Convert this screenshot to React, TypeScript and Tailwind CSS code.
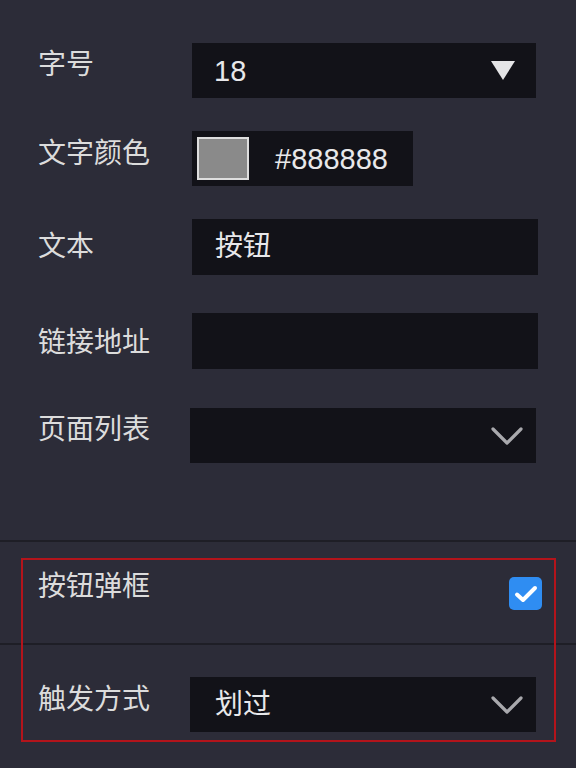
import React from "react";

const FONT = { fontFamily: '"Liberation Sans", "Noto Sans CJK SC", sans-serif' };

function Chevron() {
  return (
    <svg width="32" height="20" viewBox="0 0 32 20" className="block">
      <polyline points="2,3 16,17 30,3" fill="none" stroke="#a9a9ad" strokeWidth="3.2" strokeLinecap="round" strokeLinejoin="round" />
    </svg>
  );
}

function Triangle() {
  return (
    <svg width="24" height="19" viewBox="0 0 24 19" className="block">
      <polygon points="0,0 24,0 12,19" fill="#e4e4e6" />
    </svg>
  );
}

export default function App() {
  return (
    <div className="relative w-[576px] h-[768px] overflow-hidden bg-[#2c2c38] text-[#dcdcdc]" style={FONT}>
      {/* Section 1 */}
      <div className="flex flex-col pl-[38px] pt-[43px] pb-[77px]">
        {/* 字号 */}
        <div className="flex h-[55px] items-center">
          <div className="w-[154px] -mt-[11px] text-[28px] leading-[28px]">字号</div>
          <div className="flex h-[55px] w-[344px] items-center justify-between bg-[#121218] pl-[22px] pr-[21px]">
            <span className="text-[29px] leading-[28px] text-[#e8e8ea]">18</span>
            <Triangle />
          </div>
        </div>
        {/* 文字颜色 */}
        <div className="mt-[33px] flex h-[55px] items-center">
          <div className="w-[154px] -mt-[10px] text-[28px] leading-[28px]">文字颜色</div>
          <div className="flex h-[55px] w-[221px] items-center bg-[#121218] pl-[5px]">
            <div className="h-[43px] w-[52px] border-2 border-[#dedede] bg-[#8a8a8a]" />
            <span className="ml-[26px] text-[29px] leading-[28px] text-[#e8e8ea]">#888888</span>
          </div>
        </div>
        {/* 文本 */}
        <div className="mt-[33px] flex h-[56px] items-center">
          <div className="w-[154px] text-[28px] leading-[28px]">文本</div>
          <div className="flex h-[56px] w-[346px] items-center bg-[#121218] pl-[23px]">
            <span className="text-[28px] leading-[28px] text-[#e8e8ea]">按钮</span>
          </div>
        </div>
        {/* 链接地址 */}
        <div className="mt-[38px] flex h-[56px] items-center">
          <div className="w-[154px] mt-[4px] text-[28px] leading-[28px]">链接地址</div>
          <div className="h-[56px] w-[346px] bg-[#121218]" />
        </div>
        {/* 页面列表 */}
        <div className="mt-[39px] flex h-[55px] items-center">
          <div className="w-[152px] -mt-[11px] text-[28px] leading-[28px]">页面列表</div>
          <div className="flex h-[55px] w-[346px] items-center justify-end bg-[#121218] pr-[13px]">
            <Chevron />
          </div>
        </div>
      </div>

      <div className="h-[2px] bg-[#1e1e26]" />

      {/* Section 2 */}
      <div className="flex h-[101px] items-start justify-between pl-[38px] pr-[34px]">
        <div className="mt-[31px] text-[28px] leading-[28px]">按钮弹框</div>
        <div className="mt-[35px] flex h-[33px] w-[33px] items-center justify-center rounded-[5px] bg-[#2f8df2]">
          <svg width="24" height="20" viewBox="0 0 24 20" className="block">
            <polyline points="3,10.5 9,16 21,4" fill="none" stroke="#ffffff" strokeWidth="4" strokeLinecap="round" strokeLinejoin="round" />
          </svg>
        </div>
      </div>

      <div className="h-[2px] bg-[#1e1e26]" />

      {/* Section 3 */}
      <div className="flex flex-col pl-[38px] pt-[32px]">
        <div className="flex h-[55px] items-center">
          <div className="w-[152px] -mt-[9px] text-[28px] leading-[28px]">触发方式</div>
          <div className="flex h-[55px] w-[346px] items-center justify-between bg-[#121218] pl-[25px] pr-[13px]">
            <span className="text-[28px] leading-[28px] text-[#e8e8ea]">划过</span>
            <Chevron />
          </div>
        </div>
      </div>

      {/* annotation outline */}
      <div className="pointer-events-none absolute left-[21px] top-[558px] h-[184px] w-[535px] border-2 border-[#b3141b]" />
    </div>
  );
}
